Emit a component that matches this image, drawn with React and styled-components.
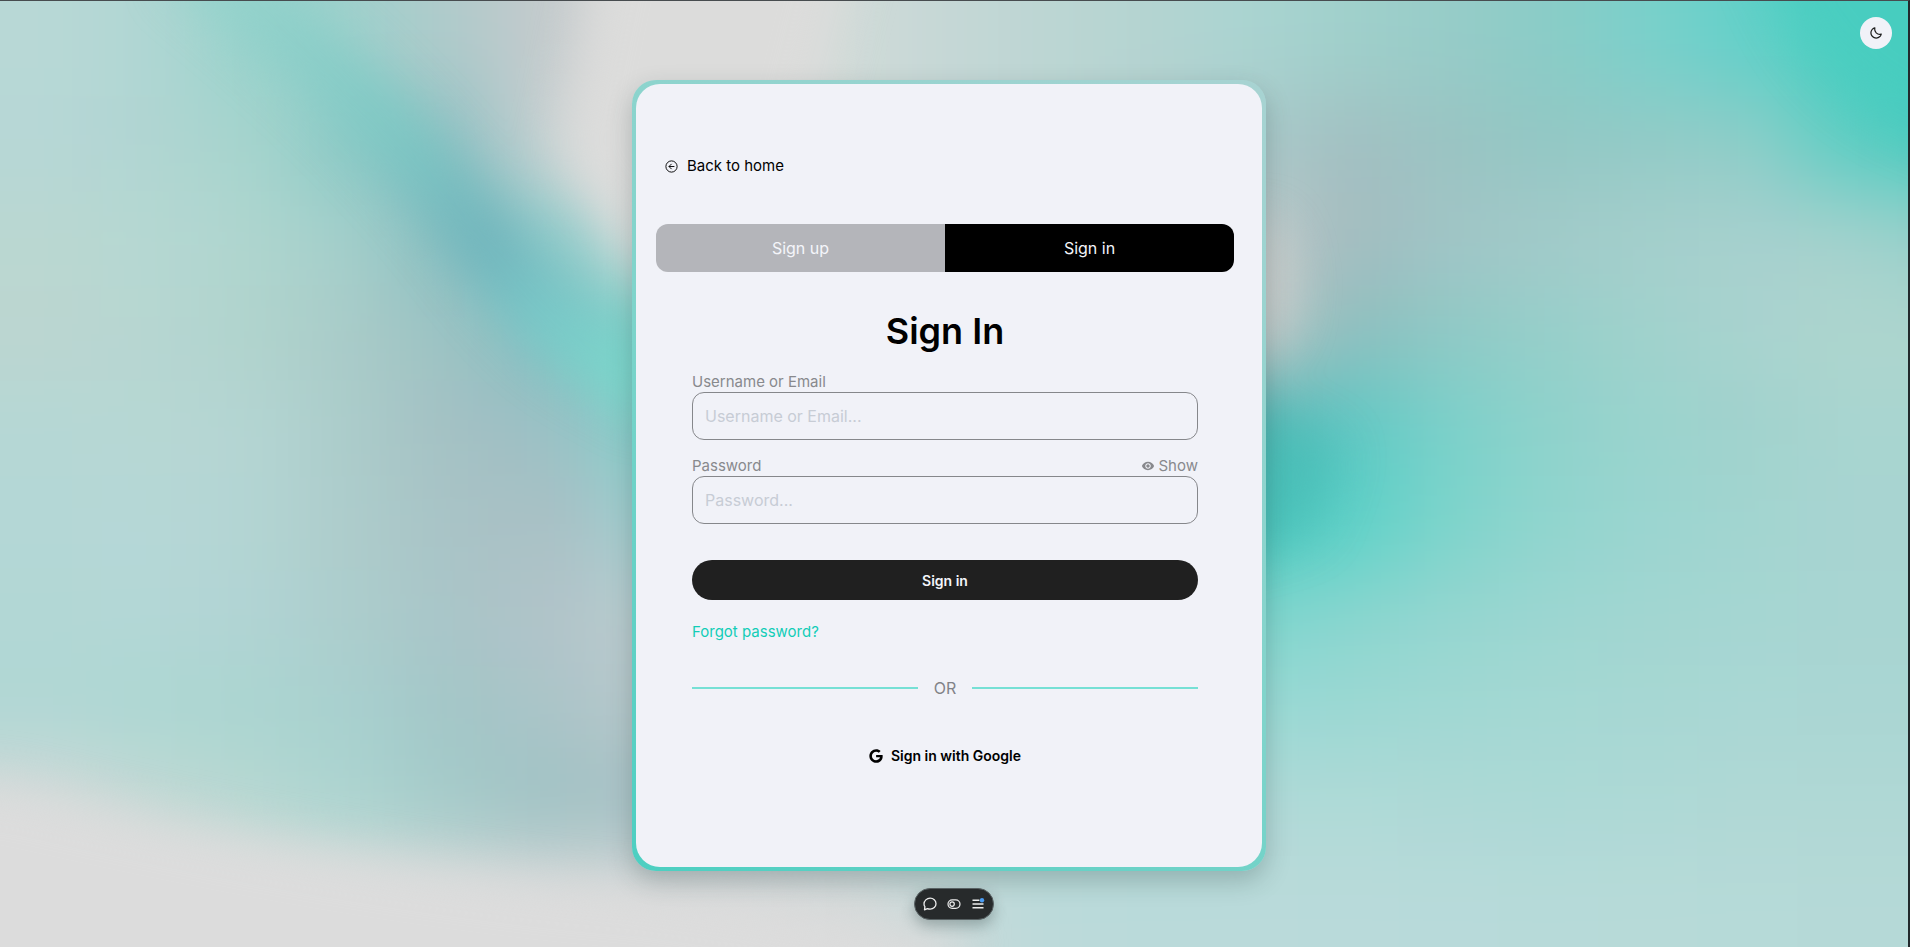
import React, { useState } from "react";
import styled, { createGlobalStyle } from "styled-components";
import { IoArrowBackCircleOutline } from "react-icons/io5";
import { IoMdEye } from "react-icons/io";
import { BiMoon } from "react-icons/bi";
import { FaGoogle } from "react-icons/fa";

const GlobalStyle = createGlobalStyle`
  *, *::before, *::after { box-sizing: border-box; }
  body {
    margin: 0;
    background: #dcdcdc;
    font-family: Inter, "Open Sans", sans-serif;
    font-size: 16px;
    color: #000;
  }
  button, input { font: inherit; color: inherit; margin: 0; }
`;

/* ---------- backdrop ---------- */

const CELL_W = 100;
const CELL_H = 95;

const mesh = [
  "b8d8d6 b0d6d3 98d3cc 9fd1cc b0cacb c4cacc dcdcdb dcdcdb d0dbd8 c5d7d6 bcd6d3 b4d4d1 aad4d1 a0d0cb 97ccc8 8accc6 7ad0cb 62d0c9 4ccfc1 46cabd",
  "b6d7d6 b0d5d2 a6d4cd 88c9c5 8cbfc2 ccd2d3 dcdcdb dcdcdb d0dbd8 c5d7d6 bcd6d3 b4cfcf a8c8c9 a2bfc1 9ac3c2 92c7c4 94cac6 90cdc8 5acdc3 46cabd",
  "bad7d1 b5d8d2 afd6cf a4cfcb 86bdbf 86cac9 c8dad7 dcdcdb dcdcdb dcdcdb d0d4d3 ccd0cf c4cccb a4bbbf a2c5c6 a3cac9 a5cfcc a8d0ce a6d1cd 94d0ca",
  "bcd6d0 b6d6d2 b0d3cc a9cbc8 9cc2c3 80bfc1 7ad6cb 7ad6cb a0d6cb c0d6d0 ccd0cf ccc8c8 c4c8c8 8dbebe 8fc9c5 96cfca a0d2cc a9d3cf aed5ce aed5ce",
  "b5d7d5 b7d7d3 b4d5d3 abccca a4c0c3 9cc0c5 82cfca 7ad6cb 7ad6cb 7ad6cb 60b0b0 48a8a8 50b0b0 5cc8c4 7ad1ca 8ed2cb 9ad3cd a0d2cd a8d5d0 a8d5d0",
  "b4d7d6 b6d7d7 b3d5d3 adcccb a8c3c6 aabfc4 a0cfd0 7ad6cb 7ad6cb 7ad6cb 60c0b8 44c6bc 48c8be 5ad2c8 7cd4cb 90d5ce 9ad5d0 a2d5d0 a8d4d1 a8d4d1",
  "b2d7d5 b4d7d6 b1d4d4 accdcc a9c5c8 b2c3c9 bccdd0 bccdd0 a0d0d0 7ed6ce 7ed6ce 7ed6ce 7ed6ce 8ad6cf 95d6d0 9cd6d1 a2d6d1 a5d6d2 a8d5d2 a8d5d2",
  "b0d7d4 acd7d2 aad5d0 a8d0cf a2c6c7 aac4c8 b8c8cb b8c8cb a8d0d0 9ad9d5 9ad9d5 9ad9d5 9ad9d5 9cd8d3 a1d8d3 a5d8d3 a7d7d3 aad7d4 aad6d3 aad6d3",
  "d4dad9 c4d9d5 b8d8d2 acd5d0 a4cbc9 9fc1c3 a5c0c4 b0c8cc b4d2d4 b0d9d7 b0d9d7 b0d9d7 b1d9d7 b0dad7 aed9d6 acd9d6 aed9d6 b0d8d5 b0d8d5 b0d8d5",
  "dcdcdc dcdcdc dcdcdc dcdcdc dcdcdc dcdcdc dcdcdc dcdcdc d8dada c8d9d9 bcdada badada badada b9dada b8dada b7dad9 b7dad8 b6dad8 b5d9d7 b5d9d7",
].map((row) => row.split(" ").map((c) => `#${c}`));

const BackdropSvg = styled.svg`
  position: absolute;
  inset: 0;
  width: 100%;
  height: 100%;
  display: block;
`;

function Backdrop() {
  const lastRow = mesh.length - 1;
  const lastCol = mesh[0].length - 1;
  return (
    <BackdropSvg viewBox="0 0 1910 947" preserveAspectRatio="none" aria-hidden="true">
      <defs>
        <filter id="meshBlur" filterUnits="userSpaceOnUse" x="-200" y="-200" width="2310" height="1347" colorInterpolationFilters="sRGB">
          <feGaussianBlur stdDeviation="42" />
        </filter>
        <filter id="softBlur" filterUnits="userSpaceOnUse" x="-200" y="-200" width="2310" height="1347" colorInterpolationFilters="sRGB">
          <feGaussianBlur stdDeviation="24" />
        </filter>
        <linearGradient id="band" gradientUnits="userSpaceOnUse" x1="220" y1="0" x2="640" y2="350">
          <stop offset="0" stopColor="#95d3cc" />
          <stop offset="0.4" stopColor="#7ec8c4" />
          <stop offset="0.66" stopColor="#70b4bc" />
          <stop offset="0.82" stopColor="#78c8c8" />
          <stop offset="1" stopColor="#7cd6cb" />
        </linearGradient>
      </defs>
      <g filter="url(#meshBlur)">
        {mesh.map((row, r) =>
          row.map((color, c) => {
            const left = c === 0 ? -200 : c * CELL_W;
            const right = c === lastCol ? 2200 : (c + 1) * CELL_W + 1;
            const top = r === 0 ? -200 : r * CELL_H;
            const bottom = r === lastRow ? 1200 : (r + 1) * CELL_H + 1;
            return (
              <rect key={`${r}-${c}`} x={left} y={top} width={right - left} height={bottom - top} fill={color} />
            );
          })
        )}
      </g>
      <g filter="url(#softBlur)">
        <path d="M610 -80 L860 -80 L760 320 L640 265 L560 160 Z" fill="#dcdcdb" />
        <path d="M190 -50 C300 40 400 130 480 235 S580 340 670 390" fill="none" stroke="url(#band)" strokeWidth="62" />
        <path d="M-80 785 L0 785 C200 830 400 872 640 892 L960 940 L960 1020 L-80 1020 Z" fill="#dcdcdc" />
        <path d="M1200 425 L1275 415 L1340 450 L1310 530 L1200 560 Z" fill="#47bdb5" opacity="0.65" />
        <ellipse cx="1258" cy="285" rx="30" ry="62" fill="#c8cccb" />
        <path d="M1760 -60 L1990 -60 L1990 150 C1900 130 1800 90 1760 -60 Z" fill="#46cdbf" opacity="0.6" />
      </g>
    </BackdropSvg>
  );
}

/* ---------- page ---------- */

const Page = styled.div`
  position: relative;
  min-height: 100vh;
  overflow: hidden;
  border-top: 1px solid #474c4f;
  border-right: 2px solid #22292c;
`;

const Main = styled.main`
  position: relative;
  display: flex;
  justify-content: center;
  padding: 79px 10px 76px 0;
`;

const ThemeButton = styled.button`
  position: absolute;
  top: 16px;
  right: 16px;
  display: grid;
  place-items: center;
  width: 32px;
  height: 32px;
  padding: 0;
  border: 0;
  border-radius: 50%;
  background: #f1f2f8;
  color: #1c1c1c;
  cursor: pointer;
`;

const Card = styled.section`
  width: 100%;
  max-width: 634px;
  padding: 4px;
  border-radius: 24px;
  background: linear-gradient(35deg, #4ccfc1 0%, #80d4cb 48%, #a8d3d2 100%);
  box-shadow: 0 10px 24px rgba(40, 60, 60, 0.25);
`;

const CardBody = styled.div`
  display: flex;
  flex-direction: column;
  padding: 72px 28px 101px 20px;
  border-radius: 24px;
  background: #f1f2f8;
`;

const BackLink = styled.a`
  display: flex;
  align-items: center;
  align-self: flex-start;
  gap: 8px;
  margin-left: 8px;
  font-size: 15px;
  line-height: 20px;
  color: #000;
  text-decoration: none;
`;

const Tabs = styled.div`
  display: flex;
  margin-top: 48px;
  border-radius: 12px;
  overflow: hidden;
`;

const Tab = styled.button`
  flex: 1;
  height: 48px;
  border: 0;
  background: ${(p) => (p.$active ? "#000" : "#b4b5ba")};
  color: #f4f5fa;
  cursor: pointer;
`;

const Form = styled.form`
  display: flex;
  flex-direction: column;
  padding: 32px 36px 0;
`;

const Title = styled.h1`
  margin: 0 0 14px;
  font-size: 36px;
  font-weight: 600;
  line-height: 54px;
  text-align: center;
`;

const Field = styled.div`
  margin-bottom: 16px;
`;

const LabelRow = styled.div`
  display: flex;
  justify-content: space-between;
  font-size: 15px;
  line-height: 20px;
  color: #88898d;
`;

const ShowButton = styled.button`
  display: flex;
  align-items: center;
  gap: 4px;
  padding: 0;
  border: 0;
  background: none;
  cursor: pointer;
`;

const Input = styled.input`
  display: block;
  width: 100%;
  height: 48px;
  padding: 0 12px;
  border: 1px solid #86878b;
  border-radius: 12px;
  outline: 0;
  background: transparent;
  &::placeholder { color: #c7ccd5; opacity: 1; }
`;

const SubmitButton = styled.button`
  height: 40px;
  margin-top: 20px;
  border: 0;
  border-radius: 20px;
  background: #202020;
  color: #f4f5fa;
  font-size: 14px;
  font-weight: 600;
  cursor: pointer;
`;

const ForgotLink = styled.a`
  align-self: flex-start;
  margin-top: 22px;
  font-size: 15px;
  line-height: 20px;
  color: #12cdb7;
  text-decoration: none;
`;

const Divider = styled.div`
  display: flex;
  align-items: center;
  gap: 16px;
  margin-top: 34px;
  line-height: 24px;
  color: #828388;
  &::before, &::after {
    content: "";
    flex: 1;
    height: 2px;
    background: #76e0d5;
  }
`;

const GoogleButton = styled.button`
  display: flex;
  align-items: center;
  align-self: center;
  gap: 8px;
  margin-top: 46px;
  padding: 0;
  border: 0;
  background: none;
  font-size: 14px;
  font-weight: 600;
  line-height: 20px;
  cursor: pointer;
`;

/* ---------- floating toolbar ---------- */

const Toolbar = styled.div`
  position: absolute;
  bottom: 27px;
  left: 50%;
  transform: translateX(-50%);
  display: flex;
  align-items: center;
  justify-content: center;
  gap: 8px;
  width: 80px;
  height: 32px;
  border: 1px solid #586163;
  border-radius: 16px;
  background: #272a2b;
  box-shadow: 0 6px 14px rgba(30, 50, 50, 0.3);
`;

const ToolButton = styled.button`
  display: grid;
  place-items: center;
  width: 16px;
  height: 16px;
  padding: 0;
  border: 0;
  background: none;
  color: #ededed;
  cursor: pointer;
`;

const CommentIcon = () => (
  <svg width="16" height="16" viewBox="0 0 16 16" fill="none" stroke="currentColor" strokeWidth="1.3">
    <path d="M2.5 13.8 L2.9 10.6 C2.3 9.8 2 8.9 2 7.9 C2 4.8 4.8 2.2 8.1 2.2 C11.4 2.2 14 4.6 14 7.7 C14 10.8 11.4 13.1 8.1 13.1 C7.1 13.1 6.2 12.9 5.4 12.6 Z" strokeLinejoin="round" />
  </svg>
);

const FlagsIcon = () => (
  <svg width="16" height="16" viewBox="0 0 16 16" fill="none" stroke="currentColor" strokeWidth="1.2">
    <rect x="2" y="3.8" width="12" height="8.6" rx="4.3" />
    <circle cx="6.1" cy="8.1" r="2.2" />
  </svg>
);

const MenuIcon = () => (
  <svg width="16" height="16" viewBox="0 0 16 16" fill="none" stroke="currentColor" strokeWidth="1.4">
    <path d="M2.5 4.2 H9.4 M2.5 8 H13.5 M2.5 11.8 H13.5" />
    <circle cx="12" cy="4.2" r="2.2" fill="#4a9df5" stroke="none" />
  </svg>
);

export default function App() {
  const [tab, setTab] = useState("in");
  const [visible, setVisible] = useState(false);

  return (
    <>
      <GlobalStyle />
      <Page>
        <Backdrop />
        <Main>
          <Card>
            <CardBody>
              <BackLink href="#home">
                <IoArrowBackCircleOutline size={15} />
                Back to home
              </BackLink>
              <Tabs>
                <Tab type="button" $active={tab === "up"} onClick={() => setTab("up")}>Sign up</Tab>
                <Tab type="button" $active={tab === "in"} onClick={() => setTab("in")}>Sign in</Tab>
              </Tabs>
              <Form onSubmit={(e) => e.preventDefault()}>
                <Title>Sign In</Title>
                <Field>
                  <LabelRow>
                    <label htmlFor="user">Username or Email</label>
                  </LabelRow>
                  <Input id="user" type="text" placeholder="Username or Email..." />
                </Field>
                <Field>
                  <LabelRow>
                    <label htmlFor="password">Password</label>
                    <ShowButton type="button" onClick={() => setVisible(!visible)}>
                      <IoMdEye size={14} />
                      {visible ? "Hide" : "Show"}
                    </ShowButton>
                  </LabelRow>
                  <Input id="password" type={visible ? "text" : "password"} placeholder="Password..." />
                </Field>
                <SubmitButton type="submit">Sign in</SubmitButton>
                <ForgotLink href="#forgot">Forgot password?</ForgotLink>
                <Divider>OR</Divider>
                <GoogleButton type="button">
                  <FaGoogle size={14} />
                  Sign in with Google
                </GoogleButton>
              </Form>
            </CardBody>
          </Card>
        </Main>
        <ThemeButton type="button" aria-label="Switch to dark theme">
          <BiMoon size={14} />
        </ThemeButton>
        <Toolbar>
          <ToolButton type="button" aria-label="Comments"><CommentIcon /></ToolButton>
          <ToolButton type="button" aria-label="Flags"><FlagsIcon /></ToolButton>
          <ToolButton type="button" aria-label="Menu"><MenuIcon /></ToolButton>
        </Toolbar>
      </Page>
    </>
  );
}
